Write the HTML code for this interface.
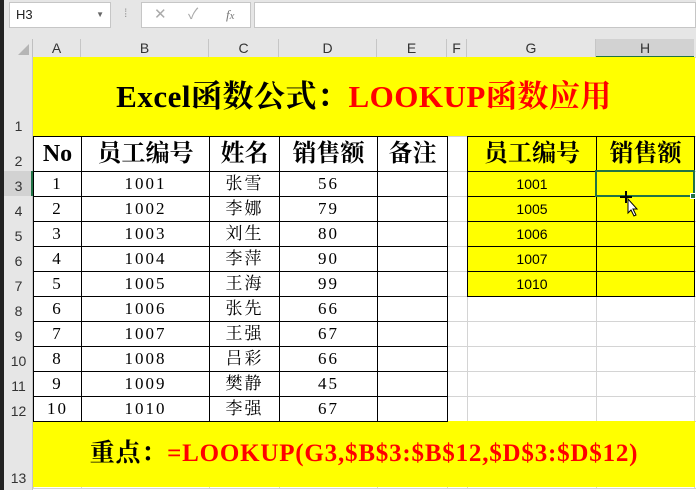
<!DOCTYPE html>
<html><head><meta charset="utf-8"><style>
*{margin:0;padding:0;box-sizing:border-box}
body{width:696px;height:490px;overflow:hidden;background:#fff;position:relative;font-family:"Liberation Sans","Noto Sans CJK SC",sans-serif}
.a{position:absolute}
table{border-collapse:collapse;table-layout:fixed;position:absolute}
td{padding:0;text-align:center;vertical-align:middle;overflow:hidden;white-space:nowrap;line-height:20px}
.g td{border:1px solid #d4d4d4}
.b td{border:1px solid #000}
.hd td{font-family:"Liberation Serif","Noto Serif CJK SC",serif;font-weight:bold;font-size:24px;line-height:30px;height:35px}
.dt td{font-family:"Liberation Serif","Noto Serif CJK SC",serif;font-size:17px;letter-spacing:2px;height:25px;line-height:20px}
.ch{color:#333;font-size:14px;text-align:center;line-height:18px}
.rh{color:#333;font-size:14px;text-align:center;width:29px;left:4px}
</style></head><body>
<div class="a" style="left:0;top:0;width:696px;height:57px;background:#e6e6e6"></div>
<div class="a" style="left:0;top:0;width:4px;height:490px;background:#222"></div>
<div class="a" style="left:9px;top:2px;width:102px;height:26px;background:#fff;border:1px solid #c6c6c6;font-size:13px;line-height:24px;padding-left:6px;color:#222">H3<span style="position:absolute;right:6px;top:0;font-size:8px;color:#666">▼</span></div>
<div class="a" style="left:124px;top:6px;color:#999;font-size:12px">⁞</div>
<div class="a" style="left:141px;top:2px;width:110px;height:26px;background:#fff;border:1px solid #c6c6c6;color:#aaa;font-size:15px;line-height:24px"><span style="position:absolute;left:12px">✕</span><span style="position:absolute;left:46px">✓</span><span style="position:absolute;left:84px;font-family:'Liberation Serif',serif;font-style:italic;font-size:13px;color:#777">f<small>x</small></span></div>
<div class="a" style="left:254px;top:2px;width:442px;height:26px;background:#fff;border:1px solid #c6c6c6"></div>
<div class="a" style="left:4px;top:39px;width:29px;height:18px;border-right:1px solid #c0c0c0"></div>
<div class="a" style="left:18px;top:44px;width:0;height:0;border-left:11px solid transparent;border-bottom:11px solid #b5b5b5"></div>
<div class="a ch" style="left:33px;top:39px;width:48px;border-right:1px solid #c6c6c6">A</div>
<div class="a ch" style="left:81px;top:39px;width:128px;border-right:1px solid #c6c6c6">B</div>
<div class="a ch" style="left:209px;top:39px;width:70px;border-right:1px solid #c6c6c6">C</div>
<div class="a ch" style="left:279px;top:39px;width:98px;border-right:1px solid #c6c6c6">D</div>
<div class="a ch" style="left:377px;top:39px;width:70px;border-right:1px solid #c6c6c6">E</div>
<div class="a ch" style="left:447px;top:39px;width:20px;border-right:1px solid #c6c6c6">F</div>
<div class="a ch" style="left:467px;top:39px;width:129px;border-right:1px solid #c6c6c6">G</div>
<div class="a ch" style="left:596px;top:39px;width:98px;background:#d2d2d2;border-bottom:2px solid #217346;height:19px">H</div>
<div class="a" style="left:4px;top:57px;width:29px;height:433px;background:#e6e6e6;border-right:1px solid #c6c6c6"></div>
<div class="a" style="left:4px;top:171px;width:29px;height:25px;background:#d2d2d2;border-right:2px solid #217346"></div>
<div class="a rh" style="top:118px">1</div>
<div class="a rh" style="top:153px">2</div>
<div class="a rh" style="top:178px">3</div>
<div class="a rh" style="top:203px">4</div>
<div class="a rh" style="top:228px">5</div>
<div class="a rh" style="top:253px">6</div>
<div class="a rh" style="top:278px">7</div>
<div class="a rh" style="top:303px">8</div>
<div class="a rh" style="top:328px">9</div>
<div class="a rh" style="top:353px">10</div>
<div class="a rh" style="top:378px">11</div>
<div class="a rh" style="top:403px">12</div>
<div class="a rh" style="top:470px">13</div>
<table class="g" style="left:33px;top:57px;width:663px">
<colgroup><col style="width:48px"><col style="width:128px"><col style="width:70px"><col style="width:98px"><col style="width:70px"><col style="width:20px"><col style="width:129px"><col style="width:98px"><col style="width:2px"></colgroup>
<tr style="height:79px"><td></td><td></td><td></td><td></td><td></td><td></td><td></td><td></td><td></td></tr>
<tr style="height:35px"><td></td><td></td><td></td><td></td><td></td><td></td><td></td><td></td><td></td></tr>
<tr style="height:25px"><td></td><td></td><td></td><td></td><td></td><td></td><td></td><td></td><td></td></tr>
<tr style="height:25px"><td></td><td></td><td></td><td></td><td></td><td></td><td></td><td></td><td></td></tr>
<tr style="height:25px"><td></td><td></td><td></td><td></td><td></td><td></td><td></td><td></td><td></td></tr>
<tr style="height:25px"><td></td><td></td><td></td><td></td><td></td><td></td><td></td><td></td><td></td></tr>
<tr style="height:25px"><td></td><td></td><td></td><td></td><td></td><td></td><td></td><td></td><td></td></tr>
<tr style="height:25px"><td></td><td></td><td></td><td></td><td></td><td></td><td></td><td></td><td></td></tr>
<tr style="height:25px"><td></td><td></td><td></td><td></td><td></td><td></td><td></td><td></td><td></td></tr>
<tr style="height:25px"><td></td><td></td><td></td><td></td><td></td><td></td><td></td><td></td><td></td></tr>
<tr style="height:25px"><td></td><td></td><td></td><td></td><td></td><td></td><td></td><td></td><td></td></tr>
<tr style="height:25px"><td></td><td></td><td></td><td></td><td></td><td></td><td></td><td></td><td></td></tr>
<tr style="height:67px"><td></td><td></td><td></td><td></td><td></td><td></td><td></td><td></td><td></td></tr>
</table>
<div class="a" style="left:33px;top:57px;width:662px;height:79px;background:#ff0;font-family:'Liberation Serif','Noto Serif CJK SC',serif;font-weight:bold;font-size:31px;line-height:79px;text-align:center;padding-left:0;letter-spacing:0.5px">Excel函数公式：<span style="color:#f00">LOOKUP函数应用</span></div>
<div class="a" style="left:33px;top:421px;width:662px;height:66px;background:#ff0;font-family:'Liberation Serif','Noto Serif CJK SC',serif;font-weight:bold;font-size:25px;line-height:66px;text-align:center;padding-left:0;letter-spacing:0.8px">重点：<span style="color:#f00">=LOOKUP(G3,$B$3:$B$12,$D$3:$D$12)</span></div>
<table class="b" style="left:33px;top:136px;width:414px">
<colgroup><col style="width:48px"><col style="width:128px"><col style="width:70px"><col style="width:98px"><col style="width:70px"></colgroup>
<tr class="hd"><td>No</td><td>员工编号</td><td>姓名</td><td>销售额</td><td>备注</td></tr>
<tr class="dt"><td>1</td><td>1001</td><td>张雪</td><td>56</td><td></td></tr>
<tr class="dt"><td>2</td><td>1002</td><td>李娜</td><td>79</td><td></td></tr>
<tr class="dt"><td>3</td><td>1003</td><td>刘生</td><td>80</td><td></td></tr>
<tr class="dt"><td>4</td><td>1004</td><td>李萍</td><td>90</td><td></td></tr>
<tr class="dt"><td>5</td><td>1005</td><td>王海</td><td>99</td><td></td></tr>
<tr class="dt"><td>6</td><td>1006</td><td>张先</td><td>66</td><td></td></tr>
<tr class="dt"><td>7</td><td>1007</td><td>王强</td><td>67</td><td></td></tr>
<tr class="dt"><td>8</td><td>1008</td><td>吕彩</td><td>66</td><td></td></tr>
<tr class="dt"><td>9</td><td>1009</td><td>樊静</td><td>45</td><td></td></tr>
<tr class="dt"><td>10</td><td>1010</td><td>李强</td><td>67</td><td></td></tr>
</table>
<table class="b" style="left:467px;top:136px;width:227px;background:#ff0">
<colgroup><col style="width:129px"><col style="width:98px"></colgroup>
<tr class="hd"><td>员工编号</td><td>销售额</td></tr>
<tr style="height:25px;font-size:14px"><td>1001</td><td></td></tr>
<tr style="height:25px;font-size:14px"><td>1005</td><td></td></tr>
<tr style="height:25px;font-size:14px"><td>1006</td><td></td></tr>
<tr style="height:25px;font-size:14px"><td>1007</td><td></td></tr>
<tr style="height:25px;font-size:14px"><td>1010</td><td></td></tr>
</table>
<div class="a" style="left:595px;top:170px;width:100px;height:27px;border:2px solid #217346"></div>
<div class="a" style="left:690px;top:193px;width:6px;height:6px;background:#217346;border:1px solid #fff"></div>
<svg class="a" style="left:618px;top:190px" width="22" height="28" viewBox="0 0 22 28">
<path d="M2 7h12M8 1v12" stroke="#000" stroke-width="2"/>
<path d="M10 9l0 14 3-3 3 6 2-1-3-6 4 0z" fill="#fff" stroke="#000" stroke-width="1"/>
</svg>
</body></html>
